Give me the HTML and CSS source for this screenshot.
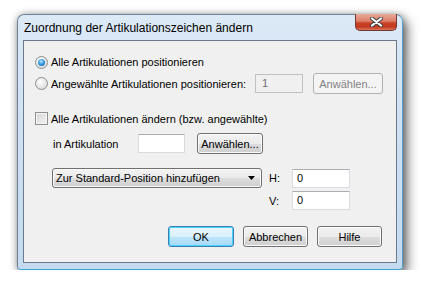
FILE: index.html
```html
<!DOCTYPE html>
<html lang="de">
<head>
  <meta charset="UTF-8" />
  <title>Zuordnung der Artikulationszeichen ändern</title>
  <link rel="stylesheet" href="styles.css">
</head>
<body>
  <div class="window">
    <div class="titlebar">
      <span class="title">Zuordnung der Artikulationszeichen ändern</span>
      <div class="close">
        <svg width="13" height="10" viewBox="0 0 13 10">
          <path d="M2 1.5 L11 8.5 M11 1.5 L2 8.5" stroke="#3a3f4a" stroke-width="4" stroke-linecap="round"/>
          <path d="M2 1.5 L11 8.5 M11 1.5 L2 8.5" stroke="#ffffff" stroke-width="2.2" stroke-linecap="round"/>
        </svg>
      </div>
    </div>

    <div class="client">
      <div class="row row-1">
        <span class="radio checked"></span>
        <span class="label">Alle Artikulationen positionieren</span>
      </div>

      <div class="row row-2">
        <span class="radio"></span>
        <span class="label label-wide">Angewählte Artikulationen positionieren:</span>
        <div class="field field-disabled field-num">1</div>
        <div class="btn btn-disabled btn-pick">Anwählen...</div>
      </div>

      <div class="row row-3">
        <span class="check"></span>
        <span class="label">Alle Artikulationen ändern (bzw. angewählte)</span>
      </div>

      <div class="row row-4">
        <span class="label label-art">in Artikulation</span>
        <div class="field field-art"></div>
        <div class="btn btn-pick2">Anwählen...</div>
      </div>

      <div class="offset-grid">
        <div class="select">
          <span>Zur Standard-Position hinzufügen</span>
          <svg width="7" height="4" viewBox="0 0 7 4"><path d="M0 0 H7 L3.5 4 Z" fill="#000"/></svg>
        </div>
        <span class="axis">H:</span>
        <div class="field field-off">0</div>
        <span></span>
        <span class="axis">V:</span>
        <div class="field field-off">0</div>
      </div>

      <div class="buttons">
        <div class="btn btn-default">OK</div>
        <div class="btn">Abbrechen</div>
        <div class="btn">Hilfe</div>
      </div>
    </div>
  </div>
</body>
</html>
```

FILE: styles.css
```css
body {
  margin: 0;
  background: #ffffff;
  font-family: 'Liberation Sans', Arial, sans-serif;
  font-size: 11px;
  color: #000;
}
.window {
  box-sizing: border-box;
  width: 386px;
  height: 256px;
  margin: 14px 0 0 17px;
  padding: 0 5px 6px 5px;
  border: 1px solid #6f8298;
  border-bottom-color: #3aa3d6;
  border-right-color: #55a0cc;
  border-radius: 7px 7px 4px 4px;
  background: linear-gradient(to bottom, #dce9f7 0%, #cfe1f3 40%, #c5daef 100%);
  box-shadow: 4px 5px 12px rgba(0,0,0,0.6), 0 0 6px rgba(0,0,0,0.25);
  display: flex;
  flex-direction: column;
}
.titlebar {
  height: 25px;
  display: flex;
  justify-content: space-between;
  align-items: flex-start;
}
.title {
  font-size: 12px;
  margin: 6px 0 0 1px;
  color: #000;
}
.close {
  box-sizing: border-box;
  width: 42px;
  height: 17px;
  margin-top: -1px;
  border: 1px solid #6e3a31;
  border-top: none;
  border-radius: 0 0 5px 5px;
  background: linear-gradient(to bottom, #e9a898 0%, #dc8069 45%, #c9432a 55%, #c23a20 80%, #da735c 100%);
  display: flex;
  align-items: center;
  justify-content: center;
}
.client {
  flex: 1;
  border: 1px solid #6b7a8a;
  background: #f0f0f0;
  padding: 0 0 0 11px;
}
.row {
  display: flex;
  align-items: center;
}
.row-1 { height: 20px; margin-top: 11px; }
.row-2 { height: 21px; margin-top: 1px; }
.row-3 { height: 21px; margin-top: 14px; }
.row-4 { height: 21px; margin-top: 4px; padding-left: 18px; }
.radio {
  box-sizing: border-box;
  width: 13px;
  height: 13px;
  border-radius: 50%;
  border: 1px solid #8b8e90;
  background: radial-gradient(circle at 40% 35%, #ffffff 0%, #e9e9e9 50%, #d0d0d0 100%);
  margin-right: 3px;
  display: flex;
  align-items: center;
  justify-content: center;
}
.radio.checked::after {
  content: "";
  width: 7px;
  height: 7px;
  border-radius: 50%;
  background: radial-gradient(circle at 45% 35%, #b8e6ff 0%, #3a9de0 45%, #0d4f9a 100%);
}
.check {
  box-sizing: border-box;
  width: 13px;
  height: 13px;
  border: 1px solid #8e8f8f;
  background: linear-gradient(135deg, #d5d5d5 0%, #f4f4f4 100%);
  box-shadow: inset 0 0 0 1px #f6f6f6;
  margin-right: 3px;
}
.label-wide { width: 204px; }
.label-art { width: 85px; }
.field {
  box-sizing: border-box;
  height: 19px;
  border: 1px solid #d9dbe0;
  border-top-color: #abadb3;
  background: #fff;
  padding-left: 4px;
  line-height: 17px;
}
.field-disabled {
  background: #f0f0f0;
  border-color: #bfc1c4;
  color: #6d6d6d;
  padding-left: 6px;
}
.field-num { width: 48px; margin-right: 10px; }
.field-art { width: 47px; margin-right: 12px; }
.field-off { width: 58px; }
.btn {
  box-sizing: border-box;
  width: 65px;
  height: 21px;
  border: 1px solid #707070;
  border-radius: 3px;
  background: linear-gradient(to bottom, #f2f2f2 0%, #ebebeb 50%, #dddddd 51%, #cfcfcf 100%);
  box-shadow: inset 0 0 0 1px #fbfbfb;
  display: flex;
  align-items: center;
  justify-content: center;
}
.btn-pick { width: 70px; }
.btn-pick2 { width: 66px; }
.btn-disabled {
  background: #f4f4f4;
  border-color: #adb2b5;
  color: #838383;
  box-shadow: none;
}
.offset-grid {
  display: grid;
  grid-template-columns: 210px 16px 58px;
  grid-template-rows: 20px 19px;
  column-gap: 7px;
  row-gap: 3px;
  margin: 14px 0 0 17px;
  align-items: center;
}
.select {
  box-sizing: border-box;
  height: 20px;
  border: 1px solid #707070;
  border-radius: 3px;
  background: linear-gradient(to bottom, #f2f2f2 0%, #ebebeb 50%, #dddddd 51%, #cfcfcf 100%);
  box-shadow: inset 0 0 0 1px #fbfbfb;
  display: flex;
  align-items: center;
  justify-content: space-between;
  padding: 0 6px 0 3px;
}
.buttons {
  display: flex;
  justify-content: flex-end;
  gap: 9px;
  margin-top: 16px;
  padding-right: 14px;
}
.btn-default {
  width: 66px;
  border-color: #3c7fb1;
  background: linear-gradient(to bottom, #eaf6fd 0%, #d9f0fc 50%, #bee6fd 51%, #a7d9f5 100%);
  box-shadow: inset 0 0 0 1px #48d4ff;
}
```
